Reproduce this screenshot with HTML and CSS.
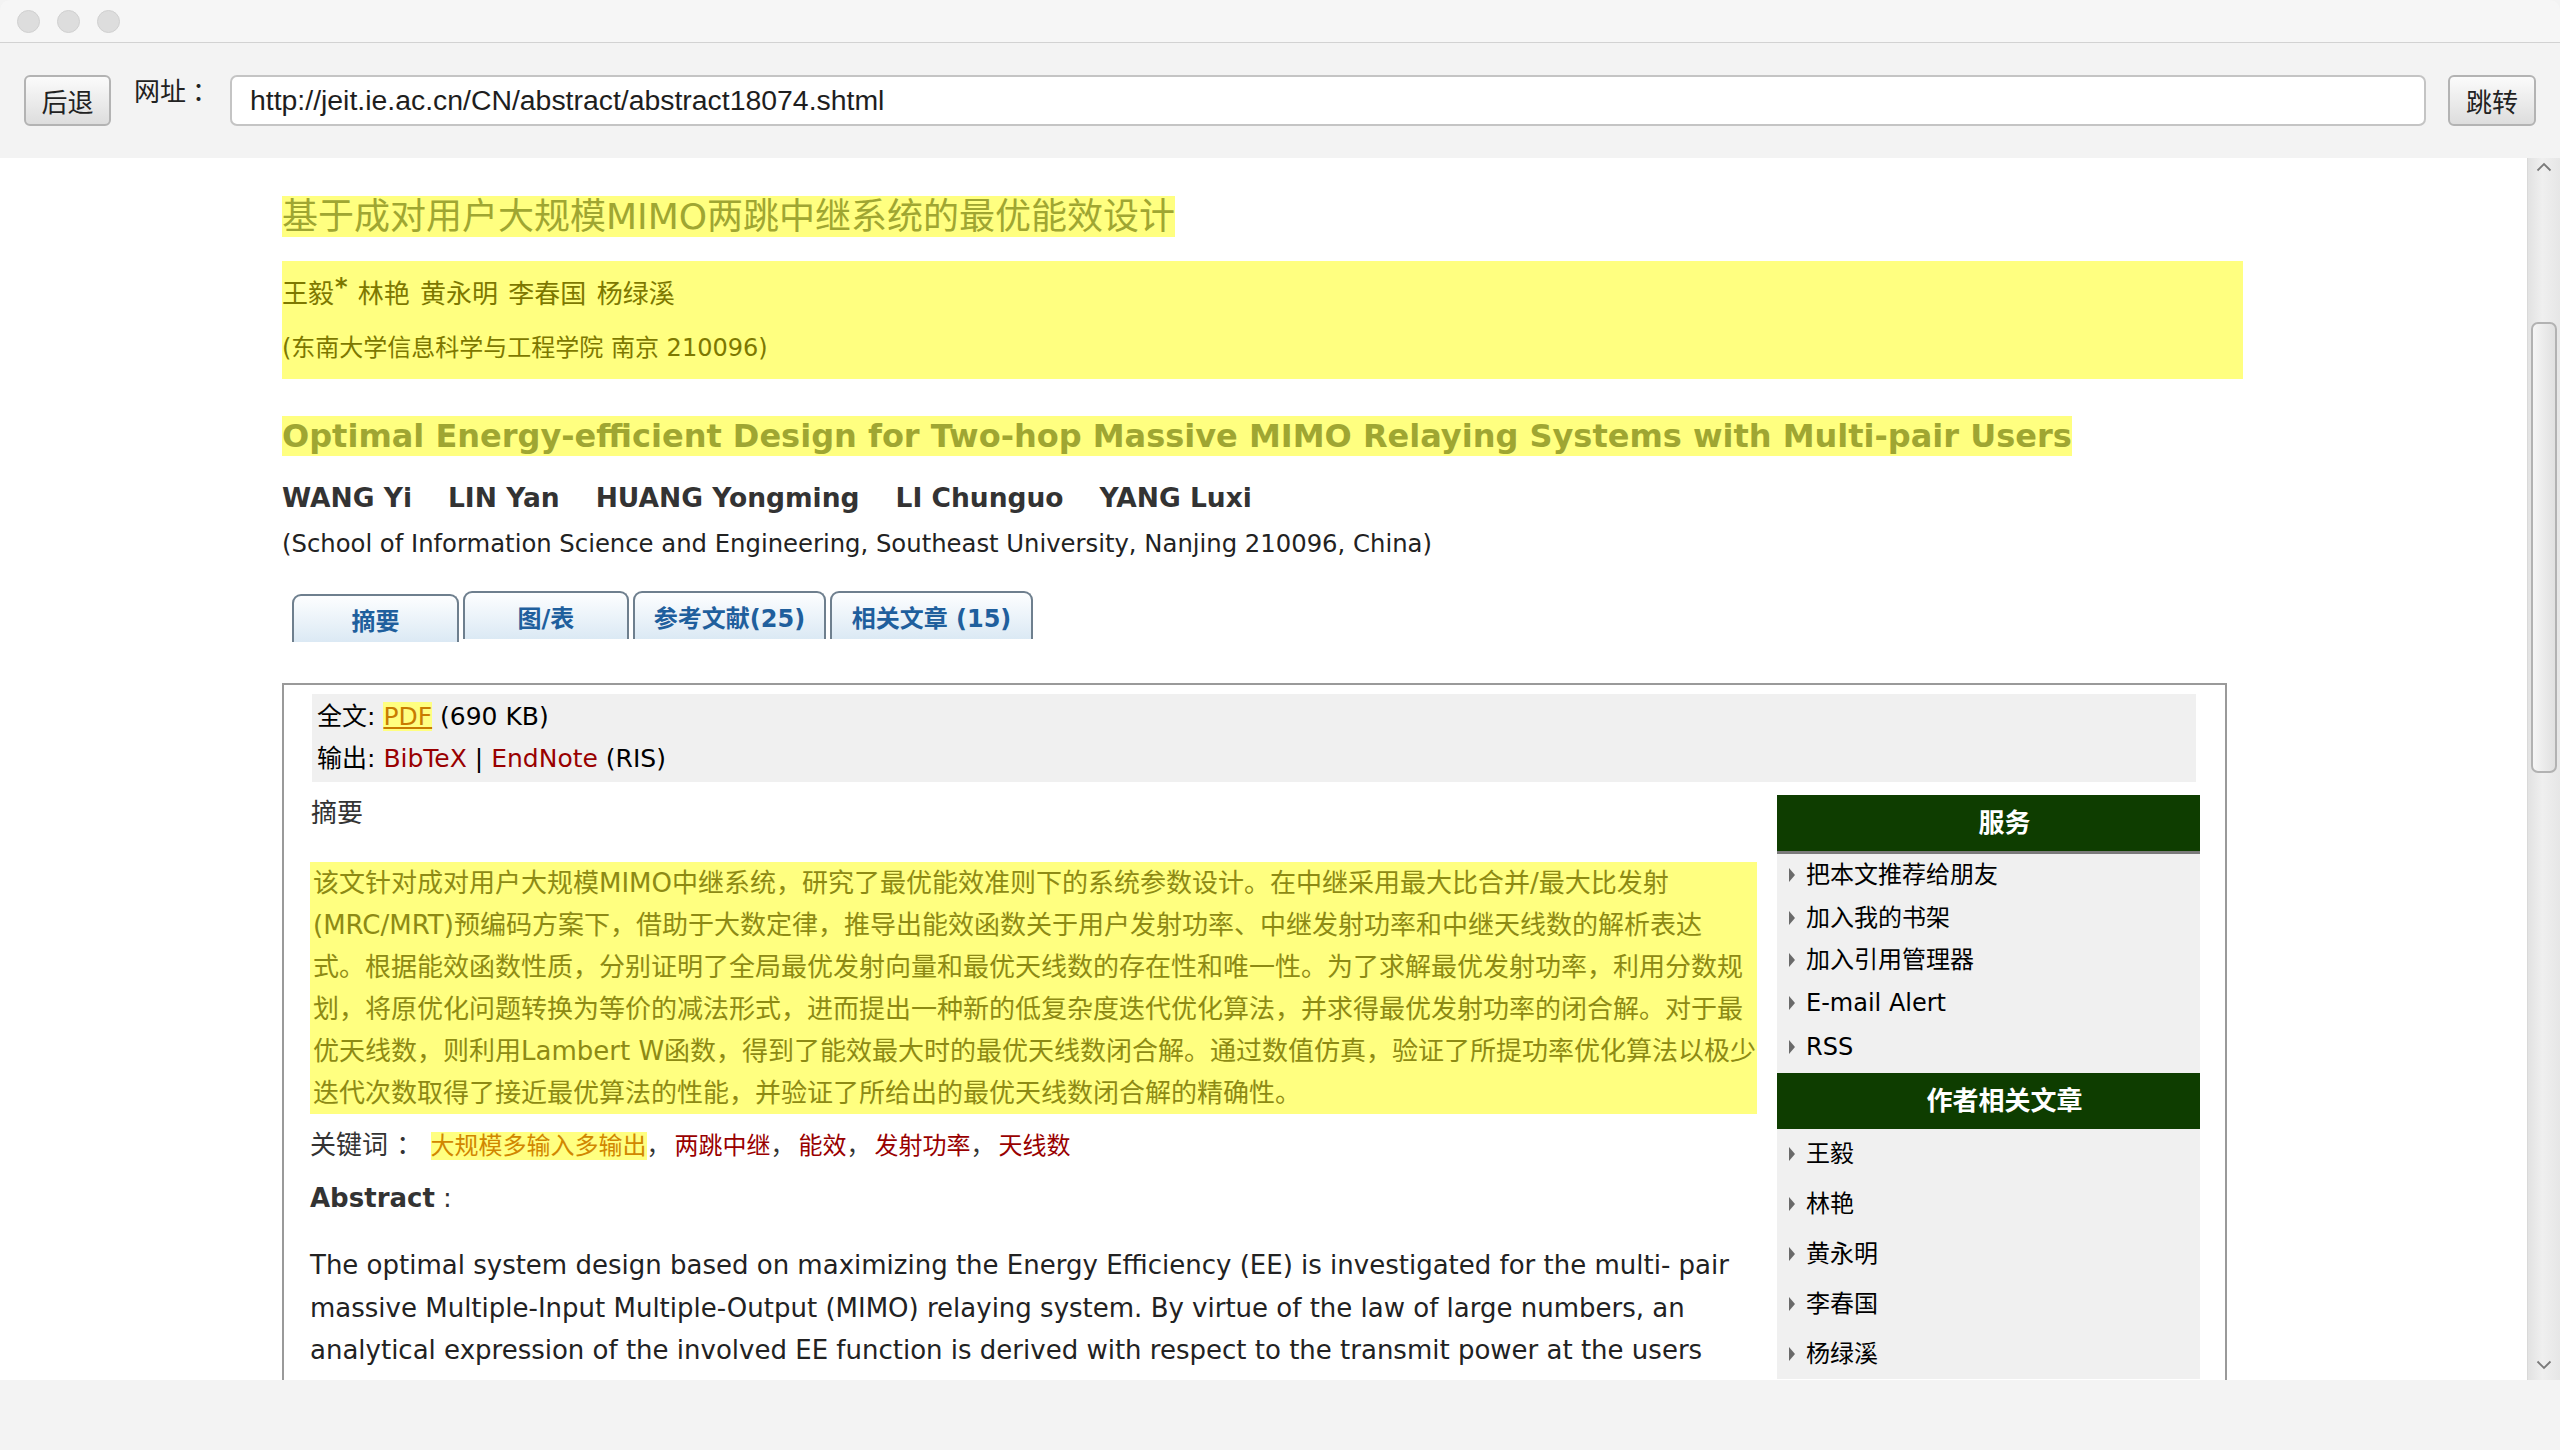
FILE: index.html
```html
<!DOCTYPE html>
<html lang="zh-CN">
<head>
<meta charset="utf-8">
<title>基于成对用户大规模MIMO两跳中继系统的最优能效设计</title>
<link rel="stylesheet" href="styles.css">
</head>
<body>
<div class="window">
  <div class="titlebar">
    <span class="light"></span><span class="light"></span><span class="light"></span>
  </div>
  <div class="toolbar">
    <button class="btn back">后退</button>
    <span class="label">网址<span class="colon">：</span></span>
    <div class="url">http://jeit.ie.ac.cn/CN/abstract/abstract18074.shtml</div>
    <button class="btn go">跳转</button>
  </div>
  <div class="viewport">
    <div class="page">
      <div class="container">
        <h1 class="cn-title"><span class="hl">基于成对用户大规模MIMO两跳中继系统的最优能效设计</span></h1>
        <div class="cn-authors">
          <p class="names">王毅<sup class="star">*</sup> 林艳 黄永明 李春国 杨绿溪</p>
          <p class="affil">(东南大学信息科学与工程学院 南京 210096)</p>
        </div>
        <h2 class="en-title"><span class="hl">Optimal Energy-efficient Design for Two-hop Massive MIMO Relaying Systems with Multi-pair Users</span></h2>
        <p class="en-authors"><span>WANG Yi</span><span>LIN Yan</span><span>HUANG Yongming</span><span>LI Chunguo</span><span>YANG Luxi</span></p>
        <p class="en-affil">(School of Information Science and Engineering, Southeast University, Nanjing 210096, China)</p>
        <div class="tabs">
          <div class="tab active t1">摘要</div>
          <div class="tab t2">图/表</div>
          <div class="tab t3">参考文献(25)</div>
          <div class="tab t4">相关文章 (15)</div>
        </div>
        <div class="box">
          <div class="info">
            <div>全文: <span class="pdf">PDF</span> (690 KB)</div>
            <div>输出: <span class="link">BibTeX</span> | <span class="link">EndNote</span> (RIS)</div>
          </div>
          <div class="cols">
            <div class="main">
              <div class="sec-label">摘要</div>
              <p class="cn-abs">该文针对成对用户大规模MIMO中继系统，研究了最优能效准则下的系统参数设计。在中继采用最大比合并/最大比发射<br>(MRC/MRT)预编码方案下，借助于大数定律，推导出能效函数关于用户发射功率、中继发射功率和中继天线数的解析表达<br>式。根据能效函数性质，分别证明了全局最优发射向量和最优天线数的存在性和唯一性。为了求解最优发射功率，利用分数规<br>划，将原优化问题转换为等价的减法形式，进而提出一种新的低复杂度迭代优化算法，并求得最优发射功率的闭合解。对于最<br>优天线数，则利用Lambert W函数，得到了能效最大时的最优天线数闭合解。通过数值仿真，验证了所提功率优化算法以极少<br>迭代次数取得了接近最优算法的性能，并验证了所给出的最优天线数闭合解的精确性。</p>
              <div class="keywords">关键词 ： <span class="kw kw-hl">大规模多输入多输出</span><span class="sep">，</span><span class="kw">两跳中继</span><span class="sep">，</span><span class="kw">能效</span><span class="sep">，</span><span class="kw">发射功率</span><span class="sep">，</span><span class="kw">天线数</span></div>
              <div class="abs-head"><b>Abstract</b> :</div>
              <p class="en-abs">The optimal system design based on maximizing the Energy Efficiency (EE) is investigated for the multi- pair massive Multiple-Input Multiple-Output (MIMO) relaying system. By virtue of the law of large numbers, an analytical expression of the involved EE function is derived with respect to the transmit power at the users and the relay, and the number of relay antennas. Based on the properties of the EE function, the existence and uniqueness of the globally optimal solution are proved.</p>
            </div>
            <aside class="side">
              <div class="side-head first">服务</div>
              <ul class="side-list svc">
                <li>把本文推荐给朋友</li>
                <li>加入我的书架</li>
                <li>加入引用管理器</li>
                <li>E-mail Alert</li>
                <li class="rss">RSS</li>
              </ul>
              <div class="side-head">作者相关文章</div>
              <ul class="side-list authors">
                <li>王毅</li>
                <li>林艳</li>
                <li>黄永明</li>
                <li>李春国</li>
                <li>杨绿溪</li>
              </ul>
            </aside>
          </div>
        </div>
      </div>
    </div>
    <div class="scrollbar">
      <svg class="arrow up" width="16" height="10" viewBox="0 0 16 10"><polyline points="1.5,8.5 8,2 14.5,8.5" fill="none" stroke="#7a7a7a" stroke-width="1.8"/></svg>
      <div class="thumb"></div>
      <svg class="arrow down" width="16" height="10" viewBox="0 0 16 10"><polyline points="1.5,1.5 8,8 14.5,1.5" fill="none" stroke="#7a7a7a" stroke-width="1.8"/></svg>
    </div>
  </div>
  <div class="statusbar"></div>
</div>
</body>
</html>
```

FILE: styles.css
```css
* { box-sizing: border-box; }
html, body { margin: 0; padding: 0; }
body {
  width: 2560px;
  height: 1450px;
  overflow: hidden;
  background: #ffffff;
  font-family: "DejaVu Sans", "Noto Sans CJK SC", sans-serif;
}
.window {
  width: 2560px;
  height: 1450px;
  display: flex;
  flex-direction: column;
  background: #f3f3f3;
}

/* title bar */
.titlebar {
  height: 43px;
  flex: none;
  background: #f6f6f6;
  border-bottom: 1px solid #d2d2d2;
  border-radius: 10px 10px 0 0;
  display: flex;
  align-items: center;
  gap: 17px;
  padding-left: 17px;
  padding-top: 1px;
}
.light {
  width: 23px;
  height: 23px;
  border-radius: 50%;
  background: #dddddd;
  border: 1px solid #d0d0d0;
}

/* toolbar */
.toolbar {
  height: 115px;
  flex: none;
  background: #f3f3f3;
  display: flex;
  align-items: flex-start;
  padding: 32px 24px 0 24px;
}
.btn {
  height: 51px;
  margin: 0;
  padding: 0;
  border: 2px solid #b3b3b3;
  border-radius: 6px;
  background: linear-gradient(#fbfbfb, #dddddd);
  font-family: "Noto Sans CJK SC", sans-serif;
  font-size: 26px;
  line-height: 47px;
  color: #222;
}
.back { width: 87px; }
.go { width: 88px; margin-left: 22px; }
.label {
  width: 96px;
  margin-left: 23px;
  font-family: "Noto Sans CJK SC", sans-serif;
  font-size: 26px;
  line-height: 30px;
  color: #222;
}
.colon { margin-left: 6px; }
.url {
  width: 2196px;
  height: 51px;
  border: 2px solid #c4c4c4;
  border-radius: 7px;
  background: #ffffff;
  font-family: "Liberation Sans", sans-serif;
  font-size: 28.4px;
  line-height: 47px;
  color: #1e1e1e;
  padding-left: 18px;
}

/* viewport */
.viewport {
  height: 1222px;
  flex: none;
  display: flex;
}
.page {
  flex: 1;
  background: #ffffff;
  overflow: hidden;
}
.statusbar {
  height: 70px;
  flex: none;
  background: #f3f3f3;
}

/* scrollbar */
.scrollbar {
  width: 33px;
  flex: none;
  background: linear-gradient(90deg, #e2e2e2, #efefef 45%, #e6e6e6);
  border-left: 1px solid #d9d9d9;
  display: flex;
  flex-direction: column;
  align-items: center;
}
.arrow { display: block; flex: none; }
.arrow.up { margin-top: 4px; }
.thumb {
  width: 26px;
  height: 451px;
  margin-top: 150px;
  border: 2px solid #b2b2b2;
  border-radius: 7px;
  background: linear-gradient(90deg, #f6f6f6, #e0e0e0);
}
.arrow.down { margin-top: auto; margin-bottom: 10px; }

/* page content */
.container {
  width: 1961px;
  margin-left: 282px;
  padding-top: 38px;
}
.hl { background: #ffff80; }
.cn-title {
  margin: 0;
  font-size: 36px;
  font-weight: normal;
  line-height: 41px;
}
.cn-title .hl {
  display: inline-block;
  color: #9fa632;
}
.cn-authors {
  margin-top: 24px;
  background: #ffff80;
  padding: 13px 0 11px;
  color: #7d7800;
}
.cn-authors p { margin: 0; }
.cn-authors .names {
  font-size: 26px;
  line-height: 40px;
  word-spacing: 2px;
}
.star {
  font-size: 24px;
  font-weight: bold;
  line-height: 0;
  vertical-align: 8px;
  margin-left: 1px;
}
.cn-authors .affil {
  margin-top: 14px;
  font-size: 24px;
  line-height: 40px;
}
.en-title {
  margin: 37px 0 0;
  font-size: 32px;
  font-weight: bold;
  line-height: 40px;
}
.en-title .hl {
  display: inline-block;
  color: #9fa632;
}
.en-authors {
  margin: 21px 0 0;
  font-size: 26.5px;
  font-weight: bold;
  line-height: 42px;
  color: #333333;
}
.en-authors span { margin-right: 36px; }
.en-affil {
  margin: 4px 0 0;
  font-size: 24.3px;
  line-height: 42px;
  color: #222222;
}

/* tabs */
.tabs {
  margin-top: 26px;
  height: 49px;
  display: flex;
  align-items: flex-start;
  gap: 4px;
  padding-left: 10px;
}
.tab {
  height: 48px;
  border: 2px solid #6e7f8e;
  border-bottom: none;
  border-radius: 9px 9px 0 0;
  background: linear-gradient(#fdfeff, #dbe9f4);
  font-size: 24px;
  font-weight: bold;
  color: #1f5f9d;
  display: flex;
  align-items: center;
  justify-content: center;
  padding-top: 0;
}
.tab.active { margin-top: 3px; }
.t1 { width: 167px; }
.t2 { width: 166px; }
.t3 { width: 193px; }
.t4 { width: 203px; }

/* main box */
.box {
  margin-top: 43px;
  width: 1945px;
  border: 2px solid #9a9a9a;
  padding: 9px 25px 60px 28px;
}
.info {
  background: #f0f0f0;
  margin-right: 4px;
  padding: 2px 5px;
  font-size: 25px;
  line-height: 42px;
  color: #000;
}
.pdf {
  background: #ffff80;
  color: #c97b00;
  text-decoration: underline;
}
.link { color: #990000; }
.cols {
  display: flex;
  gap: 20px;
  margin-left: -2px;
}
.main {
  width: 1447px;
  flex: none;
  padding-top: 10px;
}
.sec-label {
  font-size: 26px;
  line-height: 42px;
  color: #333;
  padding-left: 1px;
}
.cn-abs {
  margin: 28px 0 0;
  background: #ffff80;
  color: #8d8a14;
  font-size: 26px;
  line-height: 42px;
  padding: 0 0 0 3px;
  white-space: nowrap;
}
.keywords {
  margin-top: 10px;
  font-size: 26px;
  line-height: 42px;
  color: #333;
}
.kw {
  font-size: 24px;
  color: #990000;
}
.kw-hl {
  background: #ffff80;
  color: #d18700;
}
.sep {
  font-size: 24px;
  margin-right: 4px;
  color: #333;
}
.abs-head {
  margin-top: 10px;
  font-size: 26px;
  line-height: 42px;
  color: #333;
}
.en-abs {
  margin: 25px 0 0;
  font-size: 26px;
  line-height: 42.5px;
  color: #222;
}

/* sidebar */
.side {
  width: 423px;
  flex: none;
  margin-top: 13px;
}
.side-head {
  background: #0e3d00;
  color: #ffffff;
  font-size: 26px;
  font-weight: bold;
  text-align: center;
  height: 56px;
  line-height: 56px;
  padding-left: 32px;
}
.side-head.first {
  height: 59px;
  border-bottom: 3px solid #7a7a7a;
}
.side-list {
  list-style: none;
  margin: 0;
  padding: 0;
  background: #f0f0f0;
}
.side-list li {
  position: relative;
  padding-left: 29px;
  font-size: 24px;
  color: #000;
}
.side-list li::before {
  content: "";
  position: absolute;
  left: 12px;
  top: 50%;
  margin-top: -7px;
  border-left: 6px solid #6a6a6a;
  border-top: 7px solid transparent;
  border-bottom: 7px solid transparent;
}
.svc { padding-bottom: 4px; }
.svc li { line-height: 42.5px; }
.svc li.rss { margin-top: 2px; }
.authors li { line-height: 50px; }
```
